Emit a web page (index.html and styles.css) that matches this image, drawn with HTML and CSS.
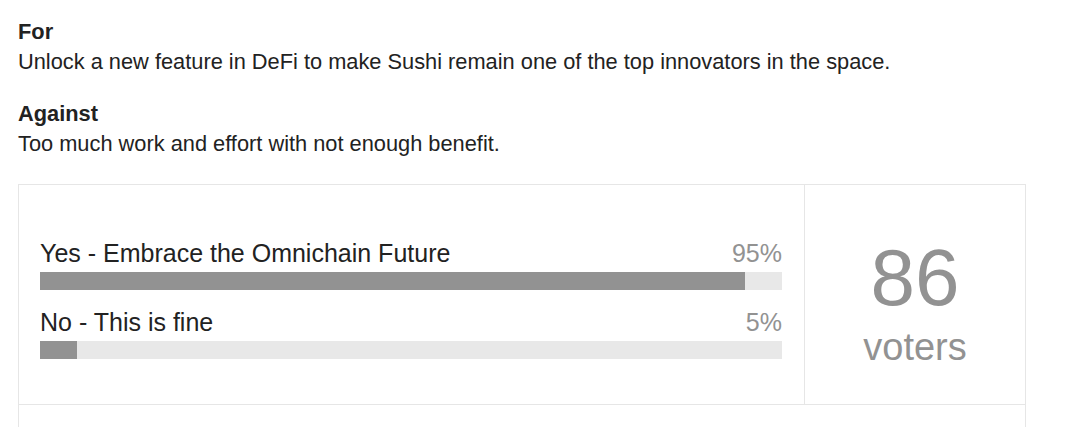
FILE: index.html
```html
<!DOCTYPE html>
<html>
  <head>
    <title>Proposal Poll</title>
    <link rel="stylesheet" href="styles.css">
  </head>
  <body>
    <div class="proposal">
      <h4>For</h4>
      <p>Unlock a new feature in DeFi to make Sushi remain one of the top innovators in the space.</p>
      <h4>Against</h4>
      <p>Too much work and effort with not enough benefit.</p>
    </div>

    <div class="poll">
      <div class="poll-row">
        <div class="poll-options">
          <div class="option">
            <div class="option-head">
              <span class="option-name">Yes - Embrace the Omnichain Future</span>
              <span class="option-pct">95%</span>
            </div>
            <div class="bar"><div class="bar-fill" style="width: 95%"></div></div>
          </div>
          <div class="option">
            <div class="option-head">
              <span class="option-name">No - This is fine</span>
              <span class="option-pct">5%</span>
            </div>
            <div class="bar"><div class="bar-fill" style="width: 5%"></div></div>
          </div>
        </div>
        <div class="poll-total">
          <div class="total-count">86</div>
          <div class="total-label">voters</div>
        </div>
      </div>
      <div class="poll-footer"></div>
    </div>
  </body>
</html>
```

FILE: styles.css
```css
body {
  margin: 0;
  padding: 17px 18px 0;
  font-family: "Liberation Sans", Arial, sans-serif;
  color: #222;
  background: #fff;
}
.proposal h4 {
  margin: 0;
  font-size: 21.8px;
  line-height: 30px;
  font-weight: bold;
}
.proposal p {
  margin: 0 0 22px;
  font-size: 21.8px;
  line-height: 30px;
}
.proposal p:last-child {
  margin-bottom: 25px;
}
.poll {
  width: 1008px;
  box-sizing: border-box;
  border: 1px solid #e6e6e6;
  border-bottom: none;
}
.poll-row {
  display: flex;
  height: 220px;
  box-sizing: border-box;
  border-bottom: 1px solid #e6e6e6;
}
.poll-options {
  flex: 1;
  padding: 53px 22px 0 21px;
}
.option {
  margin-bottom: 17px;
}
.option-head {
  display: flex;
  justify-content: space-between;
  font-size: 25px;
  line-height: 30px;
  margin-bottom: 4px;
}
.option-pct {
  color: #929292;
}
.bar {
  height: 18px;
  background: #e8e8e8;
}
.bar-fill {
  height: 100%;
  background: #929292;
}
.poll-total {
  width: 220px;
  border-left: 1px solid #e6e6e6;
  padding-top: 53px;
  text-align: center;
  color: #929292;
}
.total-count {
  font-size: 80px;
  line-height: 80px;
}
.total-label {
  margin-top: 10px;
  font-size: 38px;
  line-height: 38px;
}
.poll-footer {
  height: 22px;
}
```
